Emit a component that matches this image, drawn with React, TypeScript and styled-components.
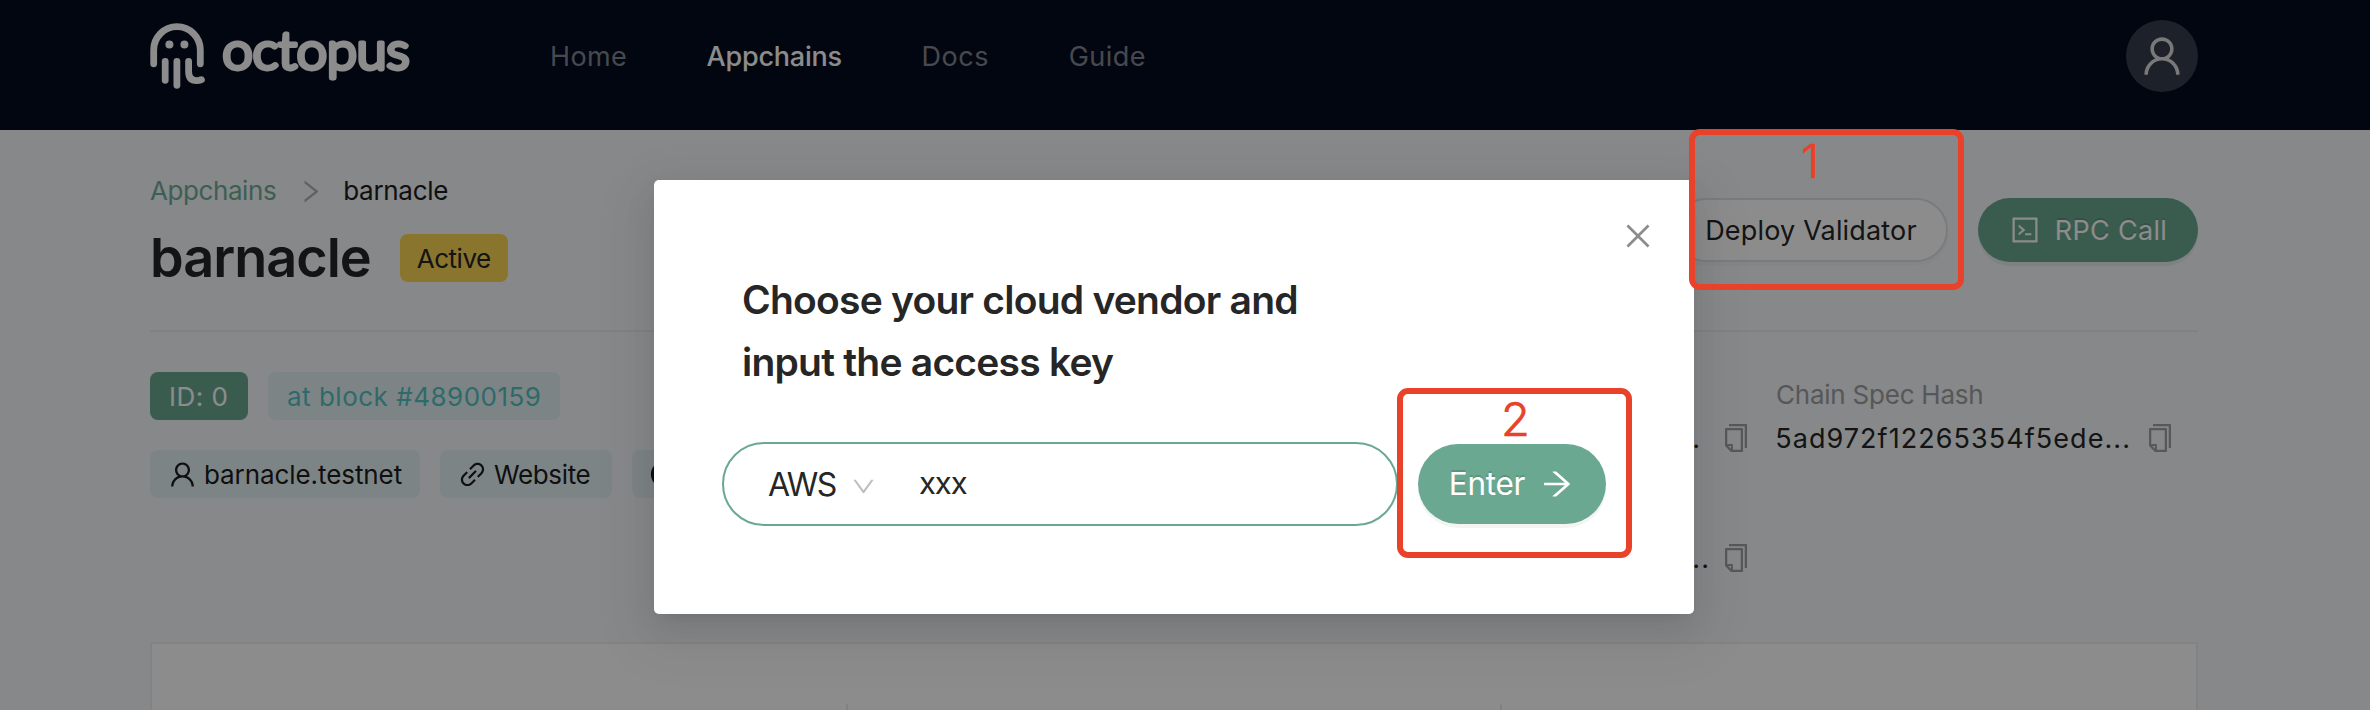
import React from "react";
import styled, { createGlobalStyle, css } from "styled-components";
import {
  AiFillGithub,
  AiOutlineArrowRight,
  AiOutlineClose,
  AiOutlineCode,
  AiOutlineCopy,
  AiOutlineDown,
  AiOutlineLink,
  AiOutlineRight,
  AiOutlineUser,
} from "react-icons/ai";

const GREEN = "#6aa891";
const RED = "#e8432a";

const GlobalStyle = createGlobalStyle`
  *, *::before, *::after { box-sizing: border-box; }
  body {
    margin: 0;
    background: #f5f7fa;
    color: #262626;
    font-family: Inter, "Liberation Sans", sans-serif;
    font-size: 26px;
    overflow: hidden;
  }
  svg { display: block; flex: none; }
`;

const Page = styled.div`
  position: relative;
  width: 2370px;
  height: 710px;
  overflow: hidden;
  display: flex;
  flex-direction: column;
`;

/* ---------- top bar ---------- */

const TopBar = styled.header`
  flex: none;
  height: 130px;
  padding: 0 172px 18px 150px;
  display: flex;
  align-items: center;
  background: #040b1e;
`;

const Nav = styled.nav`
  display: flex;
  gap: 79.5px;
  margin-left: 135px;
`;

const NavLink = styled.a<{ $active?: boolean; $track: number }>`
  font-size: 27px;
  line-height: 41px;
  font-weight: ${(p) => (p.$active ? 500 : 400)};
  letter-spacing: ${(p) => p.$track}px;
  color: ${(p) => (p.$active ? "#fff" : "rgba(255, 255, 255, 0.5)")};
`;

const Avatar = styled.button`
  width: 72px;
  height: 72px;
  margin-left: auto;
  padding: 0;
  border: 0;
  border-radius: 50%;
  display: flex;
  align-items: center;
  justify-content: center;
  background: #363d4b;
  color: #dcdcdc;
`;

/* ---------- appchain page ---------- */

const Content = styled.main`
  flex: 1;
  min-height: 0;
  padding: 0 172px 0 150px;
  display: flex;
  flex-direction: column;
`;

const PageHead = styled.section`
  flex: none;
  height: 202px;
  display: flex;
  justify-content: space-between;
  border-bottom: 2px solid #e9ebee;
`;

const Heading = styled.div`
  padding-top: 41px;
`;

const Breadcrumb = styled.div`
  display: flex;
  align-items: center;
  line-height: 40px;
  color: #1c1c1c;
  letter-spacing: -0.3px;
  svg {
    margin: 0 18px 0 20px;
    color: #b0b1b4;
  }
`;

const CrumbLink = styled.a`
  color: #6fae98;
  letter-spacing: -0.42px;
`;

const TitleRow = styled.div`
  display: flex;
  align-items: center;
  gap: 29px;
  height: 68px;
  margin-top: 13px;
`;

const Title = styled.h1`
  margin: 0;
  font-size: 54px;
  font-weight: 600;
  line-height: 68px;
  letter-spacing: -1px;
`;

const tagBase = css`
  height: 48px;
  border-radius: 8px;
  display: flex;
  align-items: center;
  white-space: nowrap;
`;

const StatusTag = styled.span`
  ${tagBase}
  width: 108px;
  justify-content: center;
  background: #f9d555;
  letter-spacing: -0.48px;
`;

const Actions = styled.div`
  display: flex;
  gap: 30px;
  padding-top: 68px;
`;

const PillButton = styled.button<{ $primary?: boolean }>`
  height: 64px;
  border-radius: 32px;
  padding: 0;
  display: flex;
  align-items: center;
  justify-content: center;
  font: 400 27px/1 Inter, "Liberation Sans", sans-serif;
  ${(p) =>
    p.$primary
      ? css`
          width: 220px;
          border: 0;
          gap: 14px;
          background: ${GREEN};
          color: #fff;
          letter-spacing: 0.3px;
          text-shadow: 0 -2px 0 rgba(0, 0, 0, 0.12);
          box-shadow: 0 4px 0 rgba(0, 0, 0, 0.045);
        `
      : css`
          width: 274px;
          border: 2px solid #e0e0e0;
          background: #fff;
          color: #262626;
          letter-spacing: 0.17px;
          box-shadow: 0 4px 0 rgba(0, 0, 0, 0.015);
        `}
`;

const Overview = styled.section`
  flex: none;
  height: 310px;
  padding-top: 40px;
  display: flex;
  justify-content: space-between;
`;

const TagRows = styled.div`
  display: flex;
  flex-direction: column;
  gap: 30px;
`;

const TagRow = styled.div`
  display: flex;
  gap: 20px;
`;

const Tag = styled.span<{ $kind?: "id" | "block" | "link"; $width: number; $track?: number }>`
  ${tagBase}
  width: ${(p) => p.$width}px;
  padding-left: ${(p) => (p.$kind === "link" ? 17 : 19)}px;
  letter-spacing: ${(p) => p.$track ?? 0}px;
  background: ${(p) => (p.$kind === "id" ? GREEN : "#e3f0f2")};
  color: ${(p) => (p.$kind === "id" ? "#fff" : p.$kind === "block" ? "#54c2c4" : "#1c1c1c")};
  svg { margin-right: 6px; }
`;

const Facts = styled.div`
  display: grid;
  grid-template-columns: 80px 400px;
  grid-auto-rows: 120px;
  column-gap: 24px;
  margin-right: 22px;
`;

const Fact = styled.div`
  display: flex;
  flex-direction: column;
`;

const FactLabel = styled.span`
  height: 44px;
  line-height: 45px;
  color: #9d9fa1;
  letter-spacing: -0.23px;
`;

const FactValue = styled.div<{ $gap?: number }>`
  display: flex;
  align-items: center;
  justify-content: flex-end;
  gap: ${(p) => p.$gap ?? 13}px;
  height: 44px;
  font-size: 27px;
  letter-spacing: 1.06px;
  svg { color: #a0a0a0; }
`;

const StatsCard = styled.section`
  flex: 1;
  padding-top: 60px;
  display: grid;
  grid-template-columns: 696px 654px 1fr;
  background: #fff;
  border: 2px solid #eeeff0;
  border-bottom: 0;
`;

const StatCell = styled.div`
  border-right: 2px solid #ececec;
  &:last-child { border-right: 0; }
`;

/* ---------- dialog ---------- */

const Mask = styled.div`
  position: absolute;
  inset: 0;
  display: flex;
  align-items: flex-start;
  justify-content: center;
  padding: 180px 22px 0 0;
  background: rgba(0, 0, 0, 0.45);
`;

const Dialog = styled.div`
  position: relative;
  width: 1040px;
  height: 434px;
  padding: 89px 68px 0;
  border-radius: 5px;
  background: #fff;
  box-shadow: 0 6px 12px -8px rgba(0, 0, 0, 0.12), 0 12px 32px rgba(0, 0, 0, 0.08),
    0 18px 56px 16px rgba(0, 0, 0, 0.05);
`;

const CloseButton = styled.button`
  position: absolute;
  top: 39px;
  right: 39px;
  padding: 0;
  border: 0;
  background: none;
  color: #8c8c8c;
`;

const DialogTitle = styled.h2`
  margin: 0 0 49px 20px;
  font-size: 39px;
  font-weight: 600;
  line-height: 62px;
  letter-spacing: -0.77px;
`;

const KeyForm = styled.div`
  display: flex;
  align-items: center;
  gap: 20px;
`;

const KeyField = styled.div`
  width: 676px;
  height: 84px;
  padding-left: 44px;
  border: 2px solid ${GREEN};
  border-radius: 42px;
  display: flex;
  align-items: center;
`;

const Vendor = styled.span`
  display: flex;
  align-items: center;
  width: 151px;
  font-size: 32px;
  letter-spacing: -1.5px;
  svg {
    margin: 4px 0 0 14px;
    color: #bfbfbf;
  }
`;

const KeyValue = styled.span`
  padding-bottom: 3px;
  font-size: 31px;
  letter-spacing: -1.1px;
`;

const EnterButton = styled.button`
  width: 188px;
  height: 80px;
  padding: 0;
  border: 0;
  border-radius: 40px;
  display: flex;
  align-items: center;
  justify-content: center;
  gap: 14px;
  background: ${GREEN};
  color: #fff;
  font: 400 31.5px/1 Inter, "Liberation Sans", sans-serif;
  letter-spacing: -0.3px;
  text-shadow: 0 -2px 0 rgba(0, 0, 0, 0.12);
  box-shadow: 0 4px 0 rgba(0, 0, 0, 0.045);
`;

/* ---------- step markers drawn over the page ---------- */

const StepMarker = styled.div<{ $x: number; $y: number; $w: number; $h: number; $digitTop: number; $shift: number }>`
  position: absolute;
  left: ${(p) => p.$x}px;
  top: ${(p) => p.$y}px;
  width: ${(p) => p.$w}px;
  height: ${(p) => p.$h}px;
  padding: ${(p) => p.$digitTop}px 0 0 ${(p) => p.$shift}px;
  border: 6px solid ${RED};
  border-radius: 11px;
  color: ${RED};
  font-size: 47px;
  font-weight: 300;
  line-height: 48px;
  -webkit-text-stroke: 0.7px ${RED};
`;

const Logo = () => (
  <svg width="265" height="76" viewBox="150 17 265 76" fill="none">
    <g stroke="#fff" strokeWidth="6.8" strokeLinecap="round" strokeLinejoin="round">
      <path d="M153.7 62.8V49a23.3 23.3 0 0 1 46.6 0V62.8" />
      <path d="M165.2 60.3V79.3" />
      <path d="M176.9 60.3V84.3" />
      <path d="M188.6 60.3V70.5Q188.6 79.6 196.5 79.6Q199.4 79.6 201.4 78.7" />
    </g>
    <circle cx="169.4" cy="43.6" r="4" fill="#fff" />
    <circle cx="184.4" cy="43.6" r="4" fill="#fff" />
    <text
      x="222.5"
      y="67.6"
      textLength="187"
      lengthAdjust="spacingAndGlyphs"
      fontFamily="Lato, sans-serif"
      fontSize="51"
      fontWeight="300"
      fill="#fff"
      stroke="#fff"
      strokeWidth="4.8"
      strokeLinejoin="round"
    >
      octopus
    </text>
  </svg>
);

export default function App() {
  return (
    <Page>
      <GlobalStyle />
      <TopBar>
        <Logo />
        <Nav>
          <NavLink $track={0.36}>Home</NavLink>
          <NavLink $active $track={-0.22}>Appchains</NavLink>
          <NavLink $track={0.6}>Docs</NavLink>
          <NavLink $track={0.45}>Guide</NavLink>
        </Nav>
        <Avatar>
          <AiOutlineUser size={48} />
        </Avatar>
      </TopBar>

      <Content>
        <PageHead>
          <Heading>
            <Breadcrumb>
              <CrumbLink>Appchains</CrumbLink>
              <AiOutlineRight size={29} />
              <span>barnacle</span>
            </Breadcrumb>
            <TitleRow>
              <Title>barnacle</Title>
              <StatusTag>Active</StatusTag>
            </TitleRow>
          </Heading>
          <Actions>
            <PillButton>Deploy Validator</PillButton>
            <PillButton $primary>
              <AiOutlineCode size={32} />
              RPC Call
            </PillButton>
          </Actions>
        </PageHead>

        <Overview>
          <TagRows>
            <TagRow>
              <Tag $kind="id" $width={98} $track={0.46}>ID: 0</Tag>
              <Tag $kind="block" $width={292} $track={0.5}>at block #48900159</Tag>
            </TagRow>
            <TagRow>
              <Tag $kind="link" $width={270} $track={-0.08}>
                <AiOutlineUser size={31} />
                barnacle.testnet
              </Tag>
              <Tag $kind="link" $width={172} $track={-0.34}>
                <AiOutlineLink size={31} />
                Website
              </Tag>
              <Tag $kind="link" $width={160}>
                <AiFillGithub size={30} />
              </Tag>
            </TagRow>
          </TagRows>
          <Facts>
            <Fact>
              <FactLabel />
              <FactValue $gap={19}>
                ...
                <AiOutlineCopy size={32} />
              </FactValue>
            </Fact>
            <Fact>
              <FactLabel>Chain Spec Hash</FactLabel>
              <FactValue>
                5ad972f12265354f5ede...
                <AiOutlineCopy size={32} />
              </FactValue>
            </Fact>
            <Fact>
              <FactLabel />
              <FactValue $gap={10}>
                ...
                <AiOutlineCopy size={32} />
              </FactValue>
            </Fact>
          </Facts>
        </Overview>

        <StatsCard>
          <StatCell />
          <StatCell />
          <StatCell />
        </StatsCard>
      </Content>

      <Mask>
        <Dialog>
          <CloseButton>
            <AiOutlineClose size={34} />
          </CloseButton>
          <DialogTitle>
            Choose your cloud vendor and
            <br />
            input the access key
          </DialogTitle>
          <KeyForm>
            <KeyField>
              <Vendor>
                AWS
                <AiOutlineDown size={27} />
              </Vendor>
              <KeyValue>xxx</KeyValue>
            </KeyField>
            <EnterButton>
              Enter
              <AiOutlineArrowRight size={36} />
            </EnterButton>
          </KeyForm>
        </Dialog>
      </Mask>

      <StepMarker $x={1689} $y={129} $w={275} $h={161} $digitTop={2} $shift={106}>1</StepMarker>
      <StepMarker $x={1397} $y={388} $w={235} $h={170} $digitTop={1} $shift={98}>2</StepMarker>
    </Page>
  );
}
